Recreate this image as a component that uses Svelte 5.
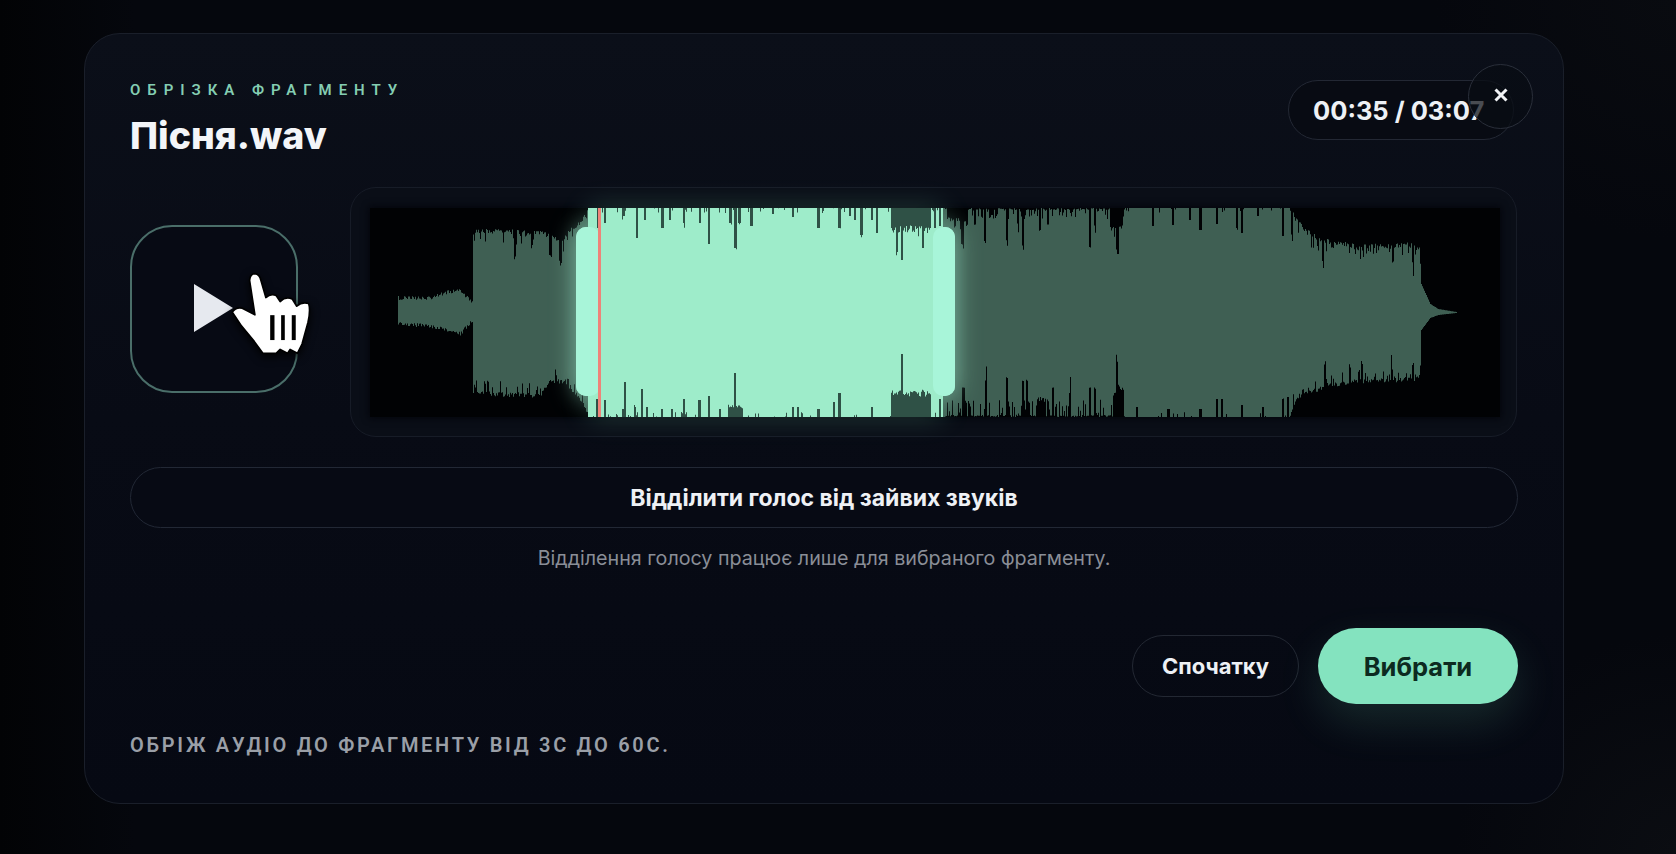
<script lang="ts">
	// waveform outline is given in page pixels, the svg viewBox maps them back onto the canvas
	type Pt = [number, number];

	const topEdge: Pt[] = [
		[398, 296], [430, 296], [440, 292], [458, 288], [472, 300], [473, 228], [540, 230], [562, 238], [572, 226], [580, 220], [588, 208],
		[1290, 208], [1303, 226], [1320, 238], [1353, 243], [1387, 244], [1411, 242], [1420, 248], [1421, 284], [1430, 304], [1438, 309], [1456, 312]
	];
	const bottomEdge: Pt[] = [
		[398, 326], [430, 328], [445, 331], [460, 336], [472, 322], [473, 396], [540, 398], [548, 384], [565, 384], [580, 402], [588, 417],
		[1290, 417], [1296, 400], [1327, 388], [1353, 384], [1387, 383], [1418, 381], [1420, 376], [1421, 330], [1430, 318], [1438, 315], [1456, 313]
	];

	// [x, depth, width] notches cut into the envelope
	const topCuts = [
		[515, 26, 2], [532, 14, 2], [550, 20, 3], [560, 16, 3], [598, 20, 2], [605, 15, 2], [623, 8, 3], [637, 30, 2], [645, 12, 2], [662, 20, 3], [670, 12, 2],
		[684, 15, 2], [700, 15, 2], [709, 36, 2], [730, 15, 3], [735, 40, 3], [739, 15, 3], [751, 18, 3], [773, 6, 2], [793, 9, 2], [818, 20, 3], [839, 20, 3], [850, 8, 2], [855, 12, 2], [861, 27, 3], [872, 12, 2], [877, 25, 2],
		[897, 44, 2], [902, 52, 2], [923, 40, 2], [935, 20, 2], [940, 18, 2], [962, 35, 3], [975, 15, 2], [985, 33, 2], [1007, 32, 2], [1018, 15, 2],
		[1023, 36, 2], [1040, 22, 2], [1048, 16, 2], [1090, 38, 2], [1095, 16, 2], [1117, 40, 3], [1153, 18, 2], [1173, 17, 2], [1190, 12, 2], [1200, 22, 3], [1217, 16, 2], [1237, 20, 2], [1242, 25, 2], [1258, 8, 2], [1283, 28, 2], [1292, 16, 2],
		[1323, 20, 2], [1393, 16, 2], [1413, 18, 2]
	];
	const bottomCuts = [
		[597, 18, 2], [605, 17, 2], [623, 8, 3], [625, 35, 2], [635, 10, 2], [642, 28, 2], [647, 10, 2], [662, 8, 2], [672, 8, 2],
		[684, 18, 2], [699, 17, 3], [709, 21, 2], [720, 8, 2], [735, 44, 2], [793, 10, 2], [798, 10, 2], [818, 8, 3], [834, 15, 2], [839, 24, 3], [872, 10, 2],
		[902, 63, 2], [940, 18, 2], [963, 28, 3], [986, 35, 2], [1007, 38, 2],
		[1023, 36, 2], [1027, 36, 2], [1053, 28, 2], [1070, 22, 2], [1090, 28, 2], [1095, 28, 2], [1117, 55, 2], [1137, 10, 2], [1168, 8, 3], [1200, 8, 3], [1217, 18, 2], [1222, 18, 2], [1242, 12, 2], [1263, 10, 2], [1283, 18, 2], [1288, 20, 2],
		[1325, 24, 2], [1350, 16, 2], [1362, 18, 2], [1392, 12, 2], [1413, 14, 2]
	];
	// wider dark lumps: [from, to, depth]
	const topMass = [[891, 930, 24], [947, 967, 13], [1110, 1122, 22]];
	const bottomMass = [[728, 742, 12], [891, 930, 26], [1037, 1045, 18], [1113, 1123, 28]];

	let seed = 41;
	function rnd() {
		seed = (seed * 16807) % 2147483647;
		return seed / 2147483647;
	}

	function lerp(edge: Pt[], x: number) {
		for (let i = 1; i < edge.length; i++) {
			if (x <= edge[i][0]) {
				const [x0, y0] = edge[i - 1];
				const [x1, y1] = edge[i];
				return y0 + ((y1 - y0) * (x - x0)) / (x1 - x0);
			}
		}
		return edge[edge.length - 1][1];
	}

	function depthAt(x: number, cuts: number[][], mass: number[][]) {
		let d = 0;
		for (const [cx, depth, w] of cuts) {
			if (x >= cx - w / 2 && x < cx + w / 2) d = Math.max(d, depth);
		}
		for (const [a, b, depth] of mass) {
			if (x >= a && x <= b) d = Math.max(d, depth * (0.72 + rnd() * 0.3));
		}
		return d;
	}

	// small teeth along the edge, rougher outside the quiet middle part
	function jitter(x: number, edgeIsBottom: boolean) {
		if (x < 473) return rnd() * 4;
		if (x >= 1421) return 0;
		if (x >= 588 && x < 945) return rnd() < 0.1 ? rnd() * 5 : 0;
		if (x >= 945 && x < 1125) return rnd() < 0.4 ? rnd() * (edgeIsBottom ? 18 : 11) : rnd() * 2;
		if (x >= 1125 && x < 1290) return rnd() < 0.08 ? rnd() * 5 : 0;
		return rnd() < 0.3 ? rnd() * 16 : rnd() * 5;
	}

	function buildPath() {
		const up: string[] = [];
		const down: string[] = [];
		for (let x = 398; x <= 1456; x++) {
			const t = lerp(topEdge, x) + jitter(x, false) + depthAt(x, topCuts, topMass);
			const b = lerp(bottomEdge, x) - jitter(x, true) - depthAt(x, bottomCuts, bottomMass);
			up.push(`${x} ${t.toFixed(1)} ${x + 1} ${t.toFixed(1)}`);
			down.unshift(`${x + 1} ${b.toFixed(1)} ${x} ${b.toFixed(1)}`);
		}
		return `M${up.join(' ')} ${down.join(' ')}Z`;
	}

	const wavePath = buildPath();
</script>

<main class="page">
	<section class="card">
		<button class="close" aria-label="Закрити">
			<svg viewBox="0 0 14 14" width="14" height="14">
				<path d="M1.5 1.5 12.5 12.5M12.5 1.5 1.5 12.5" />
			</svg>
		</button>

		<header class="head">
			<div>
				<p class="eyebrow">ОБРІЗКА ФРАГМЕНТУ</p>
				<h1 class="title">Пісня.wav</h1>
			</div>
			<div class="timer">00:35 / 03:07</div>
		</header>

		<div class="editor">
			<button class="play" aria-label="Відтворити">
				<svg class="tri" viewBox="0 0 39 48" width="39" height="48">
					<path d="M0 0 39 24 0 48Z" />
				</svg>
			</button>
			<div class="wave-box">
				<div class="canvas">
					<svg class="wave" viewBox="370 208 1130 209" width="1130" height="209">
						<path d={wavePath} />
					</svg>
					<div class="handle left"></div>
					<div class="handle right"></div>
					<div class="selection">
						<svg viewBox="588 208 355 209" width="355" height="209">
							<path d={wavePath} />
						</svg>
					</div>
					<div class="handle left top"></div>
					<div class="handle right top"></div>
					<div class="playhead"></div>
				</div>
			</div>
		</div>

		<button class="separate">Відділити голос від зайвих звуків</button>
		<p class="note">Відділення голосу працює лише для вибраного фрагменту.</p>

		<div class="actions">
			<button class="ghost">Спочатку</button>
			<button class="primary">Вибрати</button>
		</div>

		<p class="hint">ОБРІЖ АУДІО ДО ФРАГМЕНТУ ВІД 3С ДО 60С.</p>

		<!-- system pointer caught in the capture -->
		<svg class="cursor" viewBox="360 210 250 260" width="83" height="87">
			<path
				class="hand"
				d="M364 336 Q374 320 394 324 L432 344 L416 240 Q418 220 432 220 Q446 222 450 240 L465 292 Q480 278 496 286 L508 304 Q524 288 544 296 L558 318 Q574 304 594 310 Q600 330 592 366 L574 432 L560 460 L538 448 L530 460 L508 448 L496 460 L456 460 L430 424 L392 378 Z"
			/>
			<rect x="478" y="345" width="13" height="75" />
			<rect x="511" y="345" width="11" height="75" />
			<rect x="543" y="345" width="12" height="75" />
		</svg>
	</section>
</main>

<style>
	:global(body) {
		background: #03050a;
		overflow: hidden;
	}

	.page {
		box-sizing: border-box;
		height: 854px;
		padding: 33px 0 0 84px;
		background:
			radial-gradient(circle at 100% 100%, #0b0d12 0, transparent 220px),
			radial-gradient(circle at 100% 0, #090b10 0, transparent 240px),
			linear-gradient(90deg, #020305 0, #05070d 8%, #05070d 100%);
		font-family: Inter, "Noto Sans", sans-serif;
		color: #eef1f5;
	}

	.card {
		position: relative;
		box-sizing: border-box;
		width: 1480px;
		height: 771px;
		padding: 46px 45px 0;
		border: 1px solid #1a1f2a;
		border-radius: 36px;
		background: linear-gradient(180deg, #0b0f19 0, #080b15 50%, #060913 100%);
	}

	button {
		font-family: inherit;
		color: inherit;
		padding: 0;
	}

	.head {
		display: flex;
		justify-content: space-between;
		align-items: flex-start;
		height: 60px;
	}

	.eyebrow {
		margin: 1px 0 0;
		font: 600 15px/18px Roboto, sans-serif;
		letter-spacing: 6.95px;
		color: #84cdb2;
	}

	.title {
		margin: 14px 0 0;
		font-size: 37.5px;
		line-height: 46px;
		font-weight: 800;
		color: #f3f5f8;
	}

	.timer {
		box-sizing: border-box;
		width: 226px;
		height: 60px;
		margin-right: 4px;
		padding-left: 24px;
		border: 1px solid #232834;
		border-radius: 30px;
		background: #080b13;
		font-size: 25.5px;
		line-height: 59px;
		font-weight: 700;
		white-space: nowrap;
	}

	.close {
		position: absolute;
		top: 30px;
		right: 30px;
		width: 65px;
		height: 65px;
		display: flex;
		align-items: center;
		justify-content: center;
		padding-bottom: 3px;
		border: 1px solid #2a2f3a;
		border-radius: 50%;
		background: rgba(9, 12, 20, 0.72);
		z-index: 2;
	}

	.close svg {
		fill: none;
		stroke: #f1f3f6;
		stroke-width: 3;
	}

	.editor {
		display: flex;
		align-items: center;
		gap: 52px;
		margin-top: 47px;
	}

	.play {
		flex: none;
		width: 168px;
		height: 168px;
		margin-bottom: 7px;
		display: flex;
		align-items: center;
		justify-content: center;
		border: 2px solid #4a6e69;
		border-radius: 42px;
		background: #070a14;
	}

	.tri {
		margin: 0 2px 2px 0;
		fill: #e6e9ef;
	}

	.wave-box {
		box-sizing: border-box;
		width: 1167px;
		height: 250px;
		padding: 20px 16px 19px 19px;
		border: 1px solid #171c27;
		border-radius: 26px;
		background: #0a0e17;
	}

	.canvas {
		position: relative;
		width: 1130px;
		height: 209px;
		background: #010204;
		box-shadow: 0 0 7px 1px #03040a;
	}

	.wave {
		display: block;
		fill: #3f5f53;
		filter: blur(0.5px);
	}

	.selection {
		position: absolute;
		left: 218px;
		top: 0;
		width: 355px;
		height: 209px;
		background: #2f5146;
		box-shadow: 0 0 26px rgba(140, 235, 200, 0.22);
	}

	.selection svg {
		display: block;
		fill: #9eecca;
		filter: blur(0.5px);
	}

	.handle {
		position: absolute;
		top: 19px;
		width: 24px;
		height: 169px;
		border-radius: 10px;
		background: #a8f5d9;
		box-shadow: 0 0 24px rgba(168, 245, 217, 0.6);
	}

	.handle.left {
		left: 206px;
	}

	.handle.right {
		left: 563px;
		width: 22px;
	}

	.handle.top {
		box-shadow: none;
	}

	.playhead {
		position: absolute;
		left: 228px;
		top: 0;
		width: 3px;
		height: 209px;
		background: #ee8379;
	}

	.separate {
		display: block;
		box-sizing: border-box;
		width: 100%;
		height: 61px;
		margin-top: 30px;
		border: 1px solid #222835;
		border-radius: 31px;
		background: #070a14;
		font-size: 23px;
		font-weight: 700;
		color: #eef1f5;
	}

	.note {
		margin: 17px 0 0;
		text-align: center;
		font-size: 19.7px;
		line-height: 26px;
		color: #8a8e97;
	}

	.actions {
		display: flex;
		justify-content: flex-end;
		align-items: center;
		gap: 19px;
		margin-top: 57px;
	}

	.ghost {
		box-sizing: border-box;
		width: 167px;
		height: 62px;
		border: 1px solid #232833;
		border-radius: 31px;
		background: transparent;
		font-size: 22px;
		font-weight: 700;
	}

	.primary {
		width: 200px;
		height: 76px;
		border: 0;
		border-radius: 38px;
		background: #84e3bf;
		box-shadow: 0 18px 44px rgba(120, 225, 185, 0.14);
		font-size: 25.5px;
		font-weight: 700;
		color: #0c2a20;
	}

	.hint {
		margin: 28px 0 0;
		font: 600 20px/26px Roboto, sans-serif;
		letter-spacing: 2.7px;
		color: #9a9fa7;
	}

	.cursor {
		position: absolute;
		left: 146px;
		top: 236px;
		filter: drop-shadow(0 3px 4px rgba(0, 0, 0, 0.9));
	}

	.cursor .hand {
		fill: #fff;
		stroke: #000;
		stroke-width: 5;
		stroke-linejoin: round;
	}
</style>
